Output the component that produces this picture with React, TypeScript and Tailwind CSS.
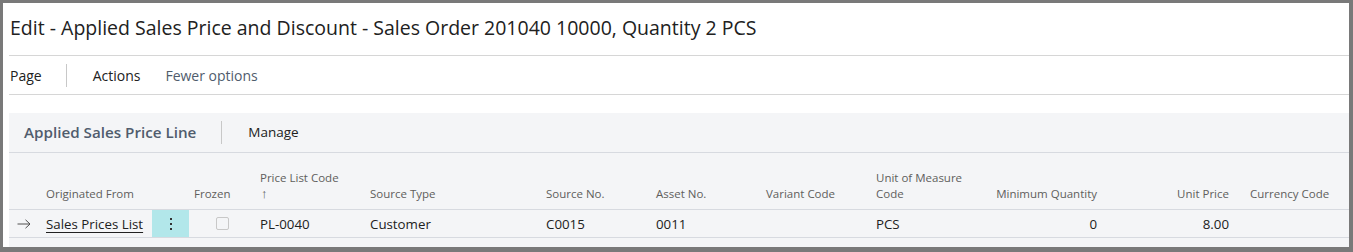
import React from "react";

const cols = [
  "w-[37px]",
  "w-[106px]",
  "w-[37px]",
  "w-[71px]",
  "w-[110px]",
  "w-[176px]",
  "w-[110px]",
  "w-[110px]",
  "w-[110px]",
  "w-[110px]",
  "w-[121px]",
  "w-[132px]",
  "flex-1",
];

function HeaderCell({ i, children, right, pl = "pl-0" }: { i: number; children?: React.ReactNode; right?: boolean; pl?: string }) {
  return (
    <div className={`${cols[i]} ${pl} ${right ? "text-right pr-[10px]" : ""} shrink-0 leading-[15px]`}>{children}</div>
  );
}

export default function App() {
  return (
    <div className="w-[1353px] h-[252px] bg-[#797979] pt-[3px] pl-[3px] pr-[4px] pb-[5px] font-['Open_Sans',sans-serif] text-[#212121]">
      <div className="h-full bg-white pl-[6px] flex flex-col">
        <div className="h-[53px] shrink-0 border-b border-[#d6d6d6] flex items-center pl-[1px] pb-[3px]">
          <h1 className="text-[19.5px]">
            Edit - Applied Sales Price and Discount - Sales Order 201040 10000, Quantity 2 PCS
          </h1>
        </div>
        <div className="h-[39px] shrink-0 border-b border-[#d6d6d6] flex items-center text-[14px] pl-[1px]">
          <span>Page</span>
          <span className="w-px h-[23px] bg-[#c8c8c8] ml-[24px] mr-[26px]" />
          <span>Actions</span>
          <span className="ml-[25px] text-[#505c6d]">Fewer options</span>
        </div>
        <div className="h-[18px] shrink-0" />
        <div className="flex-1 bg-[#f4f5f7] flex flex-col">
          <div className="h-[40px] shrink-0 border-b border-[#d7dae0] flex items-center pl-[15px]">
            <span className="text-[15.2px] font-semibold text-[#505c6d]">Applied Sales Price Line</span>
            <span className="w-px h-[23px] bg-[#c8c8c8] ml-[25px] mr-[26px]" />
            <span className="text-[13.5px]">Manage</span>
          </div>
          <div className="h-[57px] shrink-0 border-b border-[#d7dae0] flex items-end pb-[8px] text-[11.5px] text-[#605e5c]">
            <HeaderCell i={0} />
            <HeaderCell i={1}>Originated From</HeaderCell>
            <HeaderCell i={2} />
            <HeaderCell i={3} pl="pl-[5px]">Frozen</HeaderCell>
            <HeaderCell i={4}>
              <div className="mb-[1px]">Price List Code</div>
              <div className="text-[13px] pl-[1px]">↑</div>
            </HeaderCell>
            <HeaderCell i={5}>Source Type</HeaderCell>
            <HeaderCell i={6}>Source No.</HeaderCell>
            <HeaderCell i={7}>Asset No.</HeaderCell>
            <HeaderCell i={8}>Variant Code</HeaderCell>
            <HeaderCell i={9}>
              <div className="mb-[1px]">Unit of Measure</div>
              <div>Code</div>
            </HeaderCell>
            <HeaderCell i={10} right>Minimum Quantity</HeaderCell>
            <HeaderCell i={11} right>Unit Price</HeaderCell>
            <HeaderCell i={12} pl="pl-[11px]">Currency Code</HeaderCell>
          </div>
          <div className="h-[28px] shrink-0 border-b border-[#d7dae0] flex items-center text-[13.3px]">
            <div className={`${cols[0]} shrink-0 pl-[8px] flex items-center`}>
              <svg width="14" height="10" viewBox="0 0 14 10" fill="none" stroke="#505050" strokeWidth="1">
                <path d="M0.5 5H13M8.5 0.8L13 5L8.5 9.2" />
              </svg>
            </div>
            <div className={`${cols[1]} shrink-0 pt-[2px]`}>
              <span className="underline underline-offset-[3px]">Sales Prices List</span>
            </div>
            <div className={`${cols[2]} shrink-0 h-full bg-[#b2e7ea] flex flex-col items-center justify-center gap-[3px]`}>
              <span className="w-[2px] h-[2px] bg-[#333]" />
              <span className="w-[2px] h-[2px] bg-[#333]" />
              <span className="w-[2px] h-[2px] bg-[#333]" />
            </div>
            <div className={`${cols[3]} shrink-0 flex pl-[27px]`}>
              <span className="w-[13px] h-[13px] border border-[#c8c8c8] rounded-[2px] bg-[#f4f5f7]" />
            </div>
            <div className={`${cols[4]} shrink-0 pt-[2px]`}>PL-0040</div>
            <div className={`${cols[5]} shrink-0 pt-[2px]`}>Customer</div>
            <div className={`${cols[6]} shrink-0 pt-[2px]`}>C0015</div>
            <div className={`${cols[7]} shrink-0 pt-[2px]`}>0011</div>
            <div className={`${cols[8]} shrink-0`} />
            <div className={`${cols[9]} shrink-0 pt-[2px]`}>PCS</div>
            <div className={`${cols[10]} shrink-0 text-right pr-[10px] pt-[2px]`}>0</div>
            <div className={`${cols[11]} shrink-0 text-right pr-[10px] pt-[2px]`}>8.00</div>
            <div className="flex-1" />
          </div>
        </div>
      </div>
    </div>
  );
}
